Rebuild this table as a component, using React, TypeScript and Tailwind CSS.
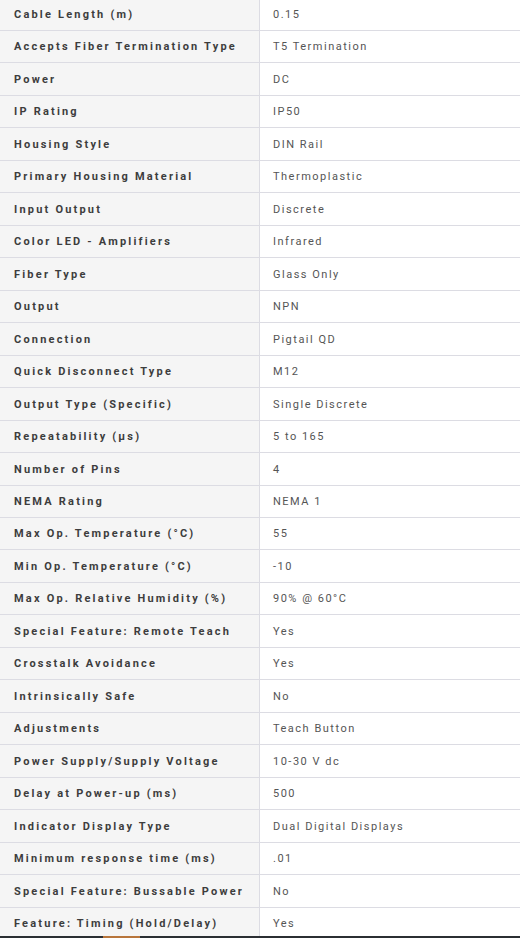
import React from 'react';

const specs: [string, string][] = [
  ['Cable Length (m)', '0.15'],
  ['Accepts Fiber Termination Type', 'T5 Termination'],
  ['Power', 'DC'],
  ['IP Rating', 'IP50'],
  ['Housing Style', 'DIN Rail'],
  ['Primary Housing Material', 'Thermoplastic'],
  ['Input Output', 'Discrete'],
  ['Color LED - Amplifiers', 'Infrared'],
  ['Fiber Type', 'Glass Only'],
  ['Output', 'NPN'],
  ['Connection', 'Pigtail QD'],
  ['Quick Disconnect Type', 'M12'],
  ['Output Type (Specific)', 'Single Discrete'],
  ['Repeatability (µs)', '5 to 165'],
  ['Number of Pins', '4'],
  ['NEMA Rating', 'NEMA 1'],
  ['Max Op. Temperature (°C)', '55'],
  ['Min Op. Temperature (°C)', '-10'],
  ['Max Op. Relative Humidity (%)', '90% @ 60°C'],
  ['Special Feature: Remote Teach', 'Yes'],
  ['Crosstalk Avoidance', 'Yes'],
  ['Intrinsically Safe', 'No'],
  ['Adjustments', 'Teach Button'],
  ['Power Supply/Supply Voltage', '10-30 V dc'],
  ['Delay at Power-up (ms)', '500'],
  ['Indicator Display Type', 'Dual Digital Displays'],
  ['Minimum response time (ms)', '.01'],
  ['Special Feature: Bussable Power', 'No'],
  ['Feature: Timing (Hold/Delay)', 'Yes'],
];

export default function App() {
  return (
    <div className="h-[938px] w-[520px] flex flex-col overflow-hidden bg-white font-['Roboto',sans-serif]">
      {/* Spec table */}
      <div className="flex-1 overflow-hidden">
        <div className="-mt-[1.5px]">
          {specs.map(([label, value]) => (
            <div key={label} className="flex h-[32.48px] box-border border-b border-[#dcdce3]">
              <div className="w-[260px] shrink-0 flex items-center pt-[2px] bg-[#f5f5f5] border-r border-[#dcdce3] pl-[14px] text-[11px] font-bold tracking-[2.2px] text-[#3d3d3d] whitespace-nowrap">
                {label}
              </div>
              <div className="flex-1 flex items-center pt-[2px] pl-[13px] text-[11px] tracking-[1.5px] text-[#555555] whitespace-nowrap">
                {value}
              </div>
            </div>
          ))}
        </div>
      </div>
      {/* Footer strip */}
      <div className="h-[2px] flex shrink-0 bg-[#2b2f33]">
        <div className="w-[103px]" />
        <div className="w-[37px] bg-[#b8763c]" />
      </div>
    </div>
  );
}
